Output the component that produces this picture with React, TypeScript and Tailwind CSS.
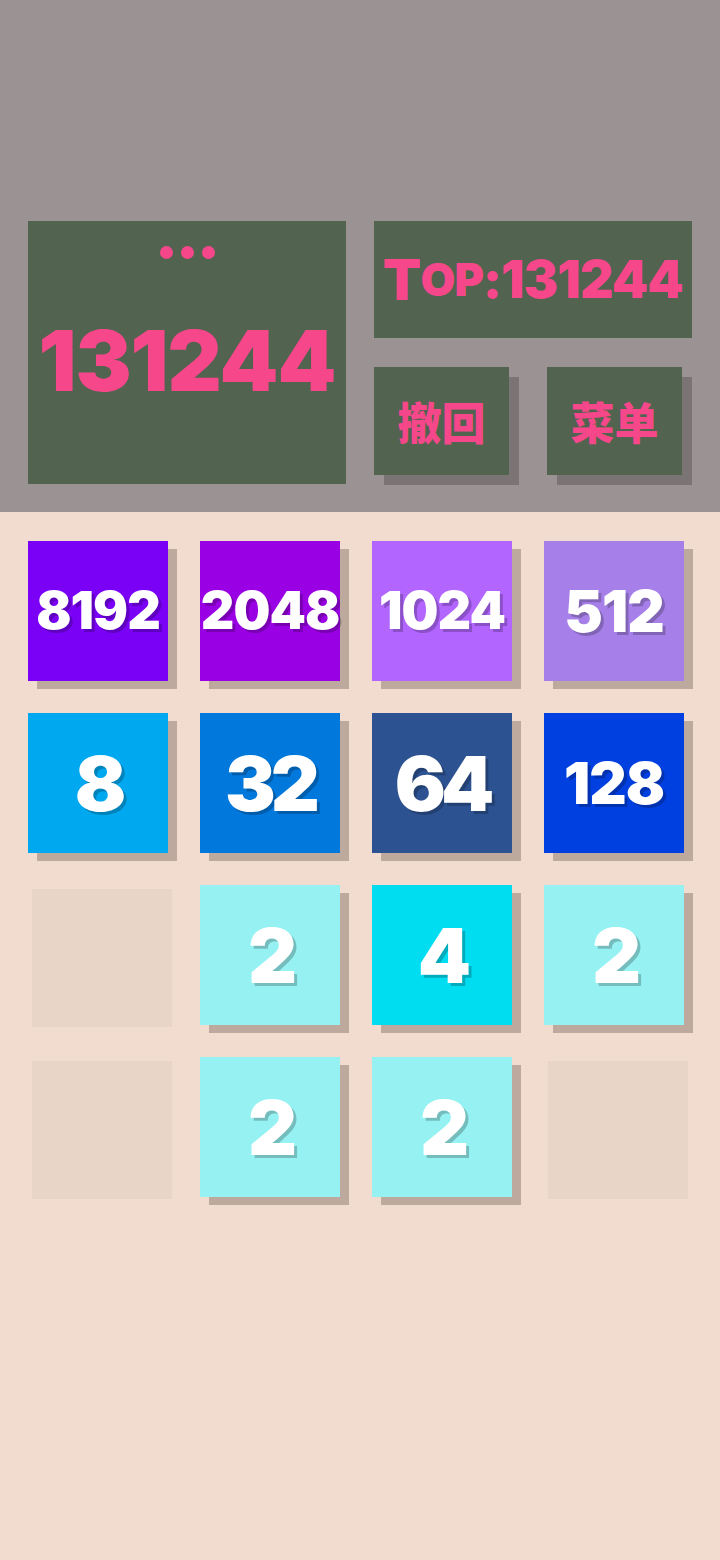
import React from "react";

type Cell = { v: number; bg: string } | null;

const rows: Cell[][] = [
  [
    { v: 8192, bg: "bg-[#7a00f6]" },
    { v: 2048, bg: "bg-[#9a00e4]" },
    { v: 1024, bg: "bg-[#b266ff]" },
    { v: 512, bg: "bg-[#a680e8]" },
  ],
  [
    { v: 8, bg: "bg-[#00a8f0]" },
    { v: 32, bg: "bg-[#0078dc]" },
    { v: 64, bg: "bg-[#2d5292]" },
    { v: 128, bg: "bg-[#0040e0]" },
  ],
  [null, { v: 2, bg: "bg-[#96f2f2]" }, { v: 4, bg: "bg-[#00dcf0]" }, { v: 2, bg: "bg-[#96f2f2]" }],
  [null, { v: 2, bg: "bg-[#96f2f2]" }, { v: 2, bg: "bg-[#96f2f2]" }, null],
];

function sizeFor(v: number) {
  const n = String(v).length;
  if (n >= 4) return "text-[52px] tracking-[-1px]";
  if (n === 3) return "text-[58px] tracking-[-1px]";
  return "text-[76px] tracking-[-5px]";
}

function Tile({ cell }: { cell: Cell }) {
  if (!cell) {
    return (
      <div className="h-[140px] w-[140px] shrink-0 pl-[4px] pt-[4px]">
        <div className="h-[138px] w-[140px] bg-[#e8d5c8]" />
      </div>
    );
  }
  return (
    <div
      className={`flex h-[140px] w-[140px] shrink-0 items-center justify-center ${cell.bg} shadow-[9px_8px_0_#bea99f]`}
    >
      <span
        className={`font-black leading-none text-white [text-shadow:3px_3px_0_rgba(0,0,0,0.22)] ${sizeFor(cell.v)}`}
      >
        {cell.v}
      </span>
    </div>
  );
}

export default function App() {
  return (
    <div
      className="min-h-[1560px] w-[720px] bg-[#f2dcd0]"
      style={{ fontFamily: "Inter, 'Noto Sans CJK SC', sans-serif" }}
    >
      <header className="flex h-[512px] gap-[28px] bg-[#9b9393] px-[28px] pt-[221px]">
        <div className="flex h-[263px] w-[318px] flex-col items-center bg-[#526350]">
          <div className="mt-[25px] flex gap-[8px]">
            <span className="h-[13px] w-[13px] rounded-full bg-[#f5478a]" />
            <span className="h-[13px] w-[13px] rounded-full bg-[#f5478a]" />
            <span className="h-[13px] w-[13px] rounded-full bg-[#f5478a]" />
          </div>
          <div className="mt-[60px] text-[84px] font-black leading-none tracking-[-1px] text-[#f5478a]">
            131244
          </div>
        </div>
        <div className="flex w-[318px] flex-col">
          <div className="flex h-[117px] items-center justify-center bg-[#526350] font-black leading-none tracking-[-1px] text-[#f5478a]">
            <span className="text-[56px]">T</span>
            <span className="text-[45px]">OP</span>
            <span className="text-[52px]">:131244</span>
          </div>
          <div className="mt-[29px] flex justify-between">
            <button className="flex h-[108px] w-[135px] items-center justify-center bg-[#526350] text-[44px] font-black text-[#f5478a] shadow-[10px_10px_0_#7b7474] [font-family:'Noto_Sans_CJK_SC',sans-serif]">
              撤回
            </button>
            <button className="mr-[10px] flex h-[108px] w-[135px] items-center justify-center bg-[#526350] text-[44px] font-black text-[#f5478a] shadow-[10px_10px_0_#7b7474] [font-family:'Noto_Sans_CJK_SC',sans-serif]">
              菜单
            </button>
          </div>
        </div>
      </header>
      <main className="flex flex-col gap-[32px] px-[28px] pt-[29px]">
        {rows.map((r, i) => (
          <div key={i} className="flex gap-[32px]">
            {r.map((c, j) => (
              <Tile key={j} cell={c} />
            ))}
          </div>
        ))}
      </main>
    </div>
  );
}
